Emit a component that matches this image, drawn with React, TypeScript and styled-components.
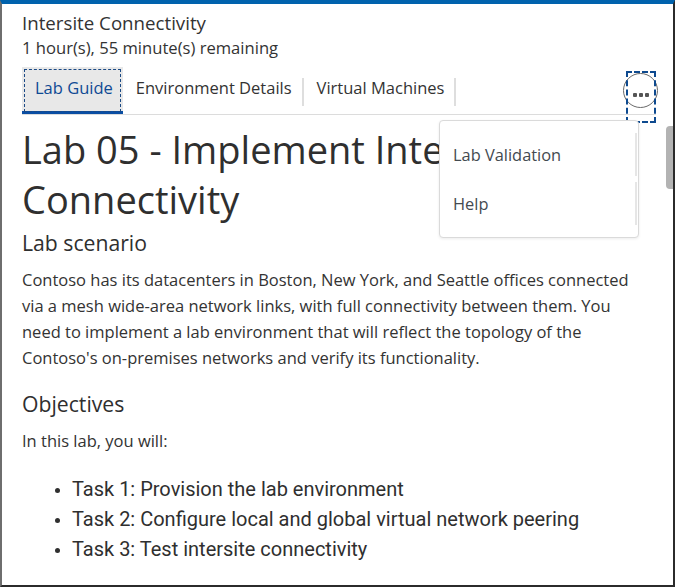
import React from "react";
import styled, { createGlobalStyle } from "styled-components";

const GlobalStyle = createGlobalStyle`
  html, body { margin: 0; padding: 0; background: #ffffff; }
  body { font-family: "Open Sans", "Noto Sans", sans-serif; color: #333333; }
  * { box-sizing: border-box; }
`;

const Frame = styled.div`
  position: relative;
  width: 675px;
  height: 587px;
  overflow: hidden;
  border-top: 4px solid #0062ad;
  border-left: 2px solid #6e6e6e;
  border-right: 2px solid #2b2b2b;
  border-bottom: 2px solid #2b2b2b;
  display: flex;
  flex-direction: column;
`;

const Header = styled.header`
  padding: 7px 0 0 20px;
  display: flex;
  flex-direction: column;
`;

const Title = styled.div`
  font-size: 18.7px;
  line-height: 24px;
  color: #333333;
`;

const Remaining = styled.div`
  font-size: 16.6px;
  line-height: 26px;
  color: #333333;
`;

const TabBar = styled.nav`
  margin: 6px 17px 0 20px;
  height: 48px;
  display: flex;
  align-items: stretch;
  border-bottom: 1px solid #dcdcdc;
`;

const Tab = styled.div<{ $active?: boolean }>`
  position: relative;
  display: flex;
  align-items: center;
  padding: 0 10px 3px 13px;
  font-size: 16.5px;
  font-weight: 500;
  color: ${(p) => (p.$active ? "#0f4a94" : "#333333")};
  background: ${(p) => (p.$active ? "#e8e8e8" : "transparent")};
  border-bottom: 3px solid ${(p) => (p.$active ? "#0a4ea3" : "transparent")};
  outline: ${(p) => (p.$active ? "1px dashed #1c4a85" : "none")};
  outline-offset: -3px;
`;

const Separator = styled.div`
  width: 2px;
  margin: 11px 0 8px;
  background: #dedede;
`;

const Spacer = styled.div`
  flex: 1;
`;

const MoreButton = styled.div`
  position: relative;
  width: 35px;
  align-self: flex-start;
  margin-top: 6px;
  margin-right: -2px;
  height: 35px;
  border: 1px solid #6a6a6a;
  border-radius: 50%;
  display: flex;
  align-items: center;
  justify-content: center;
  padding-top: 8px;
  gap: 2px;
`;

const FocusRing = styled.div`
  position: absolute;
  left: 2px;
  top: -3px;
  width: 30px;
  height: 52px;
  border: 2px dashed #0e4a8f;
`;

const Dot = styled.span`
  width: 4px;
  height: 4px;
  background: #555555;
  border-radius: 1px;
`;

const Body = styled.div`
  flex: 1;
  display: flex;
  min-height: 0;
`;

const Content = styled.main`
  flex: 1;
  padding: 9px 0 0 20px;
`;

const Track = styled.div`
  width: 7px;
  padding-top: 11px;
`;

const Thumb = styled.div`
  width: 7px;
  height: 63px;
  background: #b3b3b3;
  border-radius: 4px 0 0 4px;
`;

const H1 = styled.h1`
  margin: 0;
  font-size: 38px;
  font-weight: 400;
  line-height: 50px;
  color: #2f2f2f;
`;

const H2 = styled.h2<{ $top: number }>`
  margin: ${(p) => p.$top}px 0 0;
  font-size: 21.2px;
  font-weight: 400;
  line-height: 28px;
  color: #2f2f2f;
`;

const Para = styled.p<{ $top: number }>`
  margin: ${(p) => p.$top}px 0 0;
  font-size: 16.5px;
  line-height: 26px;
  color: #333333;
  white-space: nowrap;
`;

const List = styled.ul`
  margin: 20px 0 0;
  padding-left: 50px;
  font-family: Roboto, "Open Sans", sans-serif;
  font-size: 20px;
  line-height: 30px;
  color: #2f2f2f;
  li::marker { font-size: 16px; }
`;

const Menu = styled.div`
  position: absolute;
  left: 437px;
  top: 116px;
  width: 200px;
  height: 118px;
  background: #ffffff;
  border: 1px solid #dadada;
  border-radius: 4px;
  box-shadow: 0 1px 3px rgba(0, 0, 0, 0.08);
  padding-top: 9px;
  display: flex;
  flex-direction: column;
`;

const MenuItem = styled.div`
  display: flex;
  align-items: center;
  padding-left: 13px;
  font-size: 16.4px;
  font-weight: 500;
  color: #444a50;
  border-right: 2px solid #e6e6e6;
  margin: 3px 1px 3px 0;
  height: 43px;
`;

export default function App() {
  return (
    <>
      <GlobalStyle />
      <Frame>
        <Header>
          <Title>Intersite Connectivity</Title>
          <Remaining>1 hour(s), 55 minute(s) remaining</Remaining>
        </Header>
        <TabBar>
          <Tab $active>Lab Guide</Tab>
          <Tab>Environment Details</Tab>
          <Separator />
          <Tab>Virtual Machines</Tab>
          <Separator />
          <Spacer />
          <MoreButton>
            <FocusRing />
            <Dot />
            <Dot />
            <Dot />
          </MoreButton>
        </TabBar>
        <Body>
          <Content>
            <H1>
              Lab 05 - Implement Intersite
              <br />
              Connectivity
            </H1>
            <H2 $top={5}>Lab scenario</H2>
            <Para $top={10}>
              Contoso has its datacenters in Boston, New York, and Seattle offices connected
              <br />
              via a mesh wide-area network links, with full connectivity between them. You
              <br />
              need to implement a lab environment that will reflect the topology of the
              <br />
              Contoso's on-premises networks and verify its functionality.
            </Para>
            <H2 $top={19}>Objectives</H2>
            <Para $top={10}>In this lab, you will:</Para>
            <List>
              <li>Task 1: Provision the lab environment</li>
              <li>Task 2: Configure local and global virtual network peering</li>
              <li>Task 3: Test intersite connectivity</li>
            </List>
          </Content>
          <Track>
            <Thumb />
          </Track>
        </Body>
        <Menu>
          <MenuItem>Lab Validation</MenuItem>
          <MenuItem>Help</MenuItem>
        </Menu>
      </Frame>
    </>
  );
}
